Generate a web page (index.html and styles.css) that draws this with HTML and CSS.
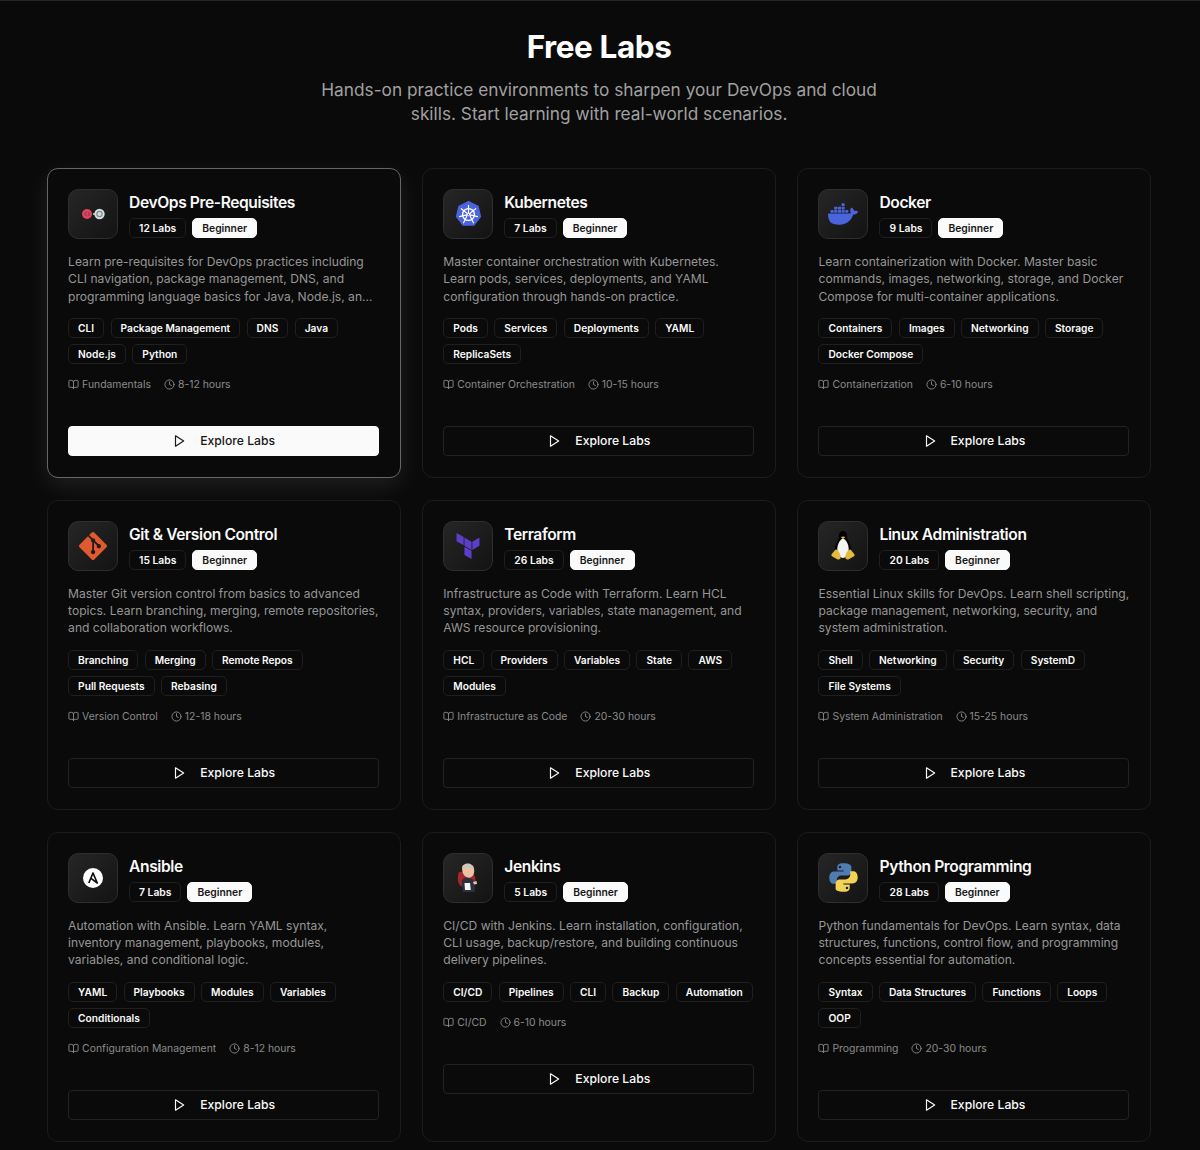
FILE: index.html
```html
<!DOCTYPE html>
<html lang="en">
<head>
    <meta charset="UTF-8">
    <meta name="viewport" content="width=device-width, initial-scale=1.0">
    <title>Free Labs</title>
    <link rel="stylesheet" href="styles.css">
</head>
<body>
    <svg class="sprite" aria-hidden="true">
        <symbol id="i-book" viewBox="0 0 24 24"><path d="M12 7v14"/><path d="M3 18a1 1 0 0 1-1-1V4a1 1 0 0 1 1-1h5a4 4 0 0 1 4 4 4 4 0 0 1 4-4h5a1 1 0 0 1 1 1v13a1 1 0 0 1-1 1h-6a3 3 0 0 0-3 3 3 3 0 0 0-3-3z"/></symbol>
        <symbol id="i-clock" viewBox="0 0 24 24"><circle cx="12" cy="12" r="10"/><path d="M12 6v6l4 2"/></symbol>
        <symbol id="i-play" viewBox="0 0 24 24"><path d="M6 3l14 9-14 9z"/></symbol>
    </svg>

    <section class="labs">
        <header class="hero">
            <h1>Free Labs</h1>
            <p>Hands-on practice environments to sharpen your DevOps and cloud skills. Start learning with real-world scenarios.</p>
        </header>

        <div class="lab-grid">
            <!-- DevOps -->
            <article class="lab-card active">
                <div class="lab-head">
                    <div class="lab-icon">
                        <svg width="36" height="36" viewBox="0 0 36 36"><path d="M18 18h8" stroke="#9aa3a8" stroke-width="2"/><circle cx="12" cy="18" r="5" fill="#d9455f"/><path d="M11.500 16l-1.800 2 1.800 2M13 16l1.500 2-1.500 2" fill="none" stroke="#8e2238" stroke-width=".8"/><circle cx="24.500" cy="18" r="5.200" fill="#d5dde0"/><circle cx="24.500" cy="18" r="2.600" fill="none" stroke="#7f8b90" stroke-width="1.200"/></svg>
                    </div>
                    <div class="lab-title">
                        <h3>DevOps Pre-Requisites</h3>
                        <div class="badges"><span class="badge">12 Labs</span><span class="badge level">Beginner</span></div>
                    </div>
                </div>
                <p class="lab-desc">Learn pre-requisites for DevOps practices including CLI navigation, package management, DNS, and programming language basics for Java, Node.js, an...</p>
                <div class="tags"><span>CLI</span><span>Package Management</span><span>DNS</span><span>Java</span><span>Node.js</span><span>Python</span></div>
                <div class="lab-meta">
                    <span><svg><use href="#i-book"/></svg>Fundamentals</span>
                    <span><svg><use href="#i-clock"/></svg>8-12 hours</span>
                </div>
                <button class="explore"><svg><use href="#i-play"/></svg>Explore Labs</button>
            </article>

            <!-- Kubernetes -->
            <article class="lab-card">
                <div class="lab-head">
                    <div class="lab-icon">
                        <svg width="27" height="27" viewBox="0 0 30 30">
                            <path d="M15 .8l10.600 5.100 2.700 11.500-7.300 9.300H9L1.700 17.400 4.400 5.900z" fill="#4a64dc" stroke="#4a64dc" stroke-width="1.500" stroke-linejoin="round"/>
                            <g fill="none" stroke="#fff" stroke-linecap="round">
                                <circle cx="15" cy="15" r="6.600" stroke-width="1.500"/>
                                <circle cx="15" cy="15" r="1.300" stroke-width="1"/>
                                <path stroke-width="1.300" d="M15 4.800v8.400M23 8.600l-6.600 5.300M25 17.300l-8.200-1.900M20.500 24.200l-3.700-7.500M9.500 24.200l3.700-7.500M5 17.300l8.200-1.900M7 8.600l6.600 5.300"/>
                            </g>
                        </svg>
                    </div>
                    <div class="lab-title">
                        <h3>Kubernetes</h3>
                        <div class="badges"><span class="badge">7 Labs</span><span class="badge level">Beginner</span></div>
                    </div>
                </div>
                <p class="lab-desc">Master container orchestration with Kubernetes. Learn pods, services, deployments, and YAML configuration through hands-on practice.</p>
                <div class="tags"><span>Pods</span><span>Services</span><span>Deployments</span><span>YAML</span><span>ReplicaSets</span></div>
                <div class="lab-meta">
                    <span><svg><use href="#i-book"/></svg>Container Orchestration</span>
                    <span><svg><use href="#i-clock"/></svg>10-15 hours</span>
                </div>
                <button class="explore"><svg><use href="#i-play"/></svg>Explore Labs</button>
            </article>

            <!-- Docker -->
            <article class="lab-card">
                <div class="lab-head">
                    <div class="lab-icon">
                        <svg width="30" height="30" viewBox="0 0 24 24"><path fill="#4a64dc" d="M13.983 11.078h2.119a.186.186 0 00.186-.185V9.006a.186.186 0 00-.186-.186h-2.119a.185.185 0 00-.185.185v1.888c0 .102.083.185.185.185m-2.954-5.43h2.118a.186.186 0 00.186-.186V3.574a.186.186 0 00-.186-.185h-2.118a.185.185 0 00-.185.185v1.888c0 .102.082.185.185.185m0 2.716h2.118a.187.187 0 00.186-.186V6.29a.186.186 0 00-.186-.185h-2.118a.185.185 0 00-.185.185v1.887c0 .102.082.185.185.186m-2.93 0h2.12a.186.186 0 00.184-.186V6.29a.185.185 0 00-.185-.185H8.1a.185.185 0 00-.185.185v1.887c0 .102.083.185.185.186m-2.964 0h2.119a.186.186 0 00.185-.186V6.29a.185.185 0 00-.185-.185H5.136a.186.186 0 00-.186.185v1.887c0 .102.084.185.186.186m5.893 2.715h2.118a.186.186 0 00.186-.185V9.006a.186.186 0 00-.186-.186h-2.118a.185.185 0 00-.185.185v1.888c0 .102.082.185.185.185m-2.93 0h2.12a.185.185 0 00.184-.185V9.006a.185.185 0 00-.184-.186h-2.12a.185.185 0 00-.184.185v1.888c0 .102.083.185.185.185m-2.964 0h2.119a.185.185 0 00.185-.185V9.006a.185.185 0 00-.184-.186h-2.12a.186.186 0 00-.186.186v1.887c0 .102.084.185.186.185m-2.92 0h2.12a.185.185 0 00.184-.185V9.006a.185.185 0 00-.184-.186h-2.12a.185.185 0 00-.184.185v1.888c0 .102.082.185.185.185M23.763 9.89c-.065-.051-.672-.51-1.954-.51-.338.001-.676.03-1.01.087-.248-1.7-1.653-2.53-1.716-2.566l-.344-.199-.226.327c-.284.438-.49.922-.612 1.43-.23.97-.09 1.882.403 2.661-.595.332-1.55.413-1.744.42H.751a.751.751 0 00-.75.748 11.376 11.376 0 00.692 4.062c.545 1.428 1.355 2.48 2.41 3.124 1.18.723 3.1 1.137 5.275 1.137.983.003 1.963-.086 2.93-.266a12.248 12.248 0 003.823-1.389c.98-.567 1.86-1.288 2.61-2.136 1.252-1.418 1.998-2.997 2.553-4.4h.221c1.372 0 2.215-.549 2.68-1.009.309-.293.55-.65.707-1.046l.098-.288Z"/></svg>
                    </div>
                    <div class="lab-title">
                        <h3>Docker</h3>
                        <div class="badges"><span class="badge">9 Labs</span><span class="badge level">Beginner</span></div>
                    </div>
                </div>
                <p class="lab-desc">Learn containerization with Docker. Master basic commands, images, networking, storage, and Docker Compose for multi-container applications.</p>
                <div class="tags"><span>Containers</span><span>Images</span><span>Networking</span><span>Storage</span><span>Docker Compose</span></div>
                <div class="lab-meta">
                    <span><svg><use href="#i-book"/></svg>Containerization</span>
                    <span><svg><use href="#i-clock"/></svg>6-10 hours</span>
                </div>
                <button class="explore"><svg><use href="#i-play"/></svg>Explore Labs</button>
            </article>

            <!-- Git -->
            <article class="lab-card">
                <div class="lab-head">
                    <div class="lab-icon">
                        <svg width="28" height="28" viewBox="0 0 24 24"><path fill="#e0592f" d="M23.546 10.93L13.067.452c-.604-.603-1.582-.603-2.188 0L8.708 2.627l2.76 2.76c.645-.215 1.379-.07 1.889.441.516.515.658 1.258.438 1.9l2.658 2.66c.645-.223 1.387-.078 1.9.435.721.72.721 1.884 0 2.604-.719.719-1.881.719-2.6 0-.539-.541-.674-1.337-.404-1.996L12.86 8.955v6.525c.176.086.342.203.488.348.713.721.713 1.883 0 2.6-.719.721-1.889.721-2.609 0-.719-.719-.719-1.879 0-2.598.182-.18.387-.316.605-.406V8.835c-.217-.091-.424-.222-.6-.401-.545-.545-.676-1.342-.396-2.009L7.636 3.7.45 10.881c-.6.605-.6 1.584 0 2.189l10.48 10.477c.604.604 1.582.604 2.186 0l10.43-10.43c.605-.603.605-1.582 0-2.187"/></svg>
                    </div>
                    <div class="lab-title">
                        <h3>Git &amp; Version Control</h3>
                        <div class="badges"><span class="badge">15 Labs</span><span class="badge level">Beginner</span></div>
                    </div>
                </div>
                <p class="lab-desc">Master Git version control from basics to advanced topics. Learn branching, merging, remote repositories, and collaboration workflows.</p>
                <div class="tags"><span>Branching</span><span>Merging</span><span>Remote Repos</span><span>Pull Requests</span><span>Rebasing</span></div>
                <div class="lab-meta">
                    <span><svg><use href="#i-book"/></svg>Version Control</span>
                    <span><svg><use href="#i-clock"/></svg>12-18 hours</span>
                </div>
                <button class="explore"><svg><use href="#i-play"/></svg>Explore Labs</button>
            </article>

            <!-- Terraform -->
            <article class="lab-card">
                <div class="lab-head">
                    <div class="lab-icon">
                        <svg width="26" height="26" viewBox="0 0 24 24"><path fill="#5c3fc9" d="M1.44 0v7.575l6.561 3.79V3.787zm21.12 4.227l-6.561 3.791v7.574l6.56-3.787zM8.72 4.23v7.575l6.561 3.787V8.018zm0 8.405v7.575L15.28 24v-7.578z"/></svg>
                    </div>
                    <div class="lab-title">
                        <h3>Terraform</h3>
                        <div class="badges"><span class="badge">26 Labs</span><span class="badge level">Beginner</span></div>
                    </div>
                </div>
                <p class="lab-desc">Infrastructure as Code with Terraform. Learn HCL syntax, providers, variables, state management, and AWS resource provisioning.</p>
                <div class="tags"><span>HCL</span><span>Providers</span><span>Variables</span><span>State</span><span>AWS</span><span>Modules</span></div>
                <div class="lab-meta">
                    <span><svg><use href="#i-book"/></svg>Infrastructure as Code</span>
                    <span><svg><use href="#i-clock"/></svg>20-30 hours</span>
                </div>
                <button class="explore"><svg><use href="#i-play"/></svg>Explore Labs</button>
            </article>

            <!-- Linux -->
            <article class="lab-card">
                <div class="lab-head">
                    <div class="lab-icon">
                        <svg width="24" height="29" viewBox="0 0 24 29">
                            <path d="M12 0C9 0 8 2.400 8 5c0 2.500-.5 3.500-2 6-1.800 3-2.500 6-2 10l3 6h10l3-6c.5-4-.2-7-2-10-1.500-2.500-2-3.500-2-6 0-2.600-1-5-4-5z" fill="#000"/>
                            <path d="M12 7.500c-1.500.8-2.400 1.200-3.500 3-1.800 3-2.600 6.500-2.100 10 .4 3 3 6.500 5.600 6.500s5.200-3.500 5.600-6.500c.5-3.500-.3-7-2.100-10-1.100-1.800-2-2.200-3.500-3z" fill="#f4f4f2"/>
                            <path d="M9.800 6c.8-.8 3.600-.8 4.400 0L12 8.200z" fill="#e2b033"/>
                            <path d="M4.500 18.500L.8 23c-.8 1-.5 2 .6 2.400l4.800 2.800c1.500.8 3.300.2 3.500-1.600.2-2.400-1.700-7-4-7.900zM19.500 18.500l3.700 4.500c.8 1 .5 2-.6 2.400l-4.800 2.800c-1.500.8-3.300.2-3.500-1.600-.2-2.400 1.700-7 4-7.900z" fill="#e6bb3a"/>
                        </svg>
                    </div>
                    <div class="lab-title">
                        <h3>Linux Administration</h3>
                        <div class="badges"><span class="badge">20 Labs</span><span class="badge level">Beginner</span></div>
                    </div>
                </div>
                <p class="lab-desc">Essential Linux skills for DevOps. Learn shell scripting, package management, networking, security, and system administration.</p>
                <div class="tags"><span>Shell</span><span>Networking</span><span>Security</span><span>SystemD</span><span>File Systems</span></div>
                <div class="lab-meta">
                    <span><svg><use href="#i-book"/></svg>System Administration</span>
                    <span><svg><use href="#i-clock"/></svg>15-25 hours</span>
                </div>
                <button class="explore"><svg><use href="#i-play"/></svg>Explore Labs</button>
            </article>

            <!-- Ansible -->
            <article class="lab-card">
                <div class="lab-head">
                    <div class="lab-icon">
                        <svg width="20" height="20" viewBox="0 0 20 20"><circle cx="10" cy="10" r="10" fill="#fff"/><path d="M5.800 15L10 5l4.300 10-6.300-4.600" fill="none" stroke="#111" stroke-width="1.700" stroke-linejoin="round"/></svg>
                    </div>
                    <div class="lab-title">
                        <h3>Ansible</h3>
                        <div class="badges"><span class="badge">7 Labs</span><span class="badge level">Beginner</span></div>
                    </div>
                </div>
                <p class="lab-desc">Automation with Ansible. Learn YAML syntax, inventory management, playbooks, modules, variables, and conditional logic.</p>
                <div class="tags"><span>YAML</span><span>Playbooks</span><span>Modules</span><span>Variables</span><span>Conditionals</span></div>
                <div class="lab-meta">
                    <span><svg><use href="#i-book"/></svg>Configuration Management</span>
                    <span><svg><use href="#i-clock"/></svg>8-12 hours</span>
                </div>
                <button class="explore"><svg><use href="#i-play"/></svg>Explore Labs</button>
            </article>

            <!-- Jenkins -->
            <article class="lab-card">
                <div class="lab-head">
                    <div class="lab-icon">
                        <svg width="26" height="30" viewBox="0 0 26 30">
                            <path d="M4 9c-1.500 3-1.500 8-.5 11 1 2.500 3 3.500 4.500 3.500L18 22c2-1 3-4 2-8L17 8z" fill="#a5282c"/>
                            <path d="M7 5c0-3 3-4.500 6-4.500S19 3 19 6c.5 2 .2 4-.5 5.500-1 2.500-3.500 3.500-5.500 3-3-.5-5-3-5.500-5.500z" fill="#e9c3a4"/>
                            <path d="M8 3c2-2.500 7-3 10 0l1 3c-3-1-7-2-11-.5z" fill="#c9c5bf"/>
                            <path d="M7 17c2-2 3-2.500 5-2 3 0 5 .5 6.500 2l1.500 6c.5 2-.5 6-.5 6H8l-1-6c-.3-2-.5-4 0-6z" fill="#2b2f3f"/>
                            <path d="M9.500 20h5.500l.8 7H10z" fill="#f4f4f2"/>
                            <path d="M18 19l3.500-1 .5 3-3 .5z" fill="#e9c3a4"/>
                        </svg>
                    </div>
                    <div class="lab-title">
                        <h3>Jenkins</h3>
                        <div class="badges"><span class="badge">5 Labs</span><span class="badge level">Beginner</span></div>
                    </div>
                </div>
                <p class="lab-desc">CI/CD with Jenkins. Learn installation, configuration, CLI usage, backup/restore, and building continuous delivery pipelines.</p>
                <div class="tags"><span>CI/CD</span><span>Pipelines</span><span>CLI</span><span>Backup</span><span>Automation</span></div>
                <div class="lab-meta">
                    <span><svg><use href="#i-book"/></svg>CI/CD</span>
                    <span><svg><use href="#i-clock"/></svg>6-10 hours</span>
                </div>
                <button class="explore"><svg><use href="#i-play"/></svg>Explore Labs</button>
            </article>

            <!-- Python -->
            <article class="lab-card">
                <div class="lab-head">
                    <div class="lab-icon">
                        <svg width="31" height="31" viewBox="0 0 24 24">
                            <path fill="#4f7db3" fill-rule="evenodd" d="M11.800 1C7.800 1 7.200 2.700 7.200 4.100v2.500h4.900v.8H5C2.800 7.400 1 8.800 1 12.100c0 3.300 1.700 4.800 3.500 4.800h2.300v-2.800c0-2 1.700-3.600 3.700-3.600h4.600c1.700 0 3-1.400 3-3.100V4.100C18.100 2.500 16.700 1 11.800 1zM9.300 2.900a.95.95 0 1 1 0 1.900.95.95 0 0 1 0-1.900z"/>
                            <path fill="#f2d257" fill-rule="evenodd" d="M12.200 23c4 0 4.600-1.700 4.600-3.100v-2.500h-4.900v-.8H19c2.200 0 4-1.400 4-4.700 0-3.300-1.700-4.800-3.500-4.800h-2.300v2.800c0 2-1.700 3.600-3.700 3.600H8.900c-1.700 0-3 1.400-3 3.100v4.300C5.900 21.500 7.300 23 12.200 23zM14.700 21.100a.95.95 0 1 1 0-1.900.95.95 0 0 1 0 1.900z"/>
                        </svg>
                    </div>
                    <div class="lab-title">
                        <h3>Python Programming</h3>
                        <div class="badges"><span class="badge">28 Labs</span><span class="badge level">Beginner</span></div>
                    </div>
                </div>
                <p class="lab-desc">Python fundamentals for DevOps. Learn syntax, data structures, functions, control flow, and programming concepts essential for automation.</p>
                <div class="tags"><span>Syntax</span><span>Data Structures</span><span>Functions</span><span>Loops</span><span>OOP</span></div>
                <div class="lab-meta">
                    <span><svg><use href="#i-book"/></svg>Programming</span>
                    <span><svg><use href="#i-clock"/></svg>20-30 hours</span>
                </div>
                <button class="explore"><svg><use href="#i-play"/></svg>Explore Labs</button>
            </article>
        </div>
    </section>
</body>
</html>
```

FILE: styles.css
```css
* {
    margin: 0;
    padding: 0;
    box-sizing: border-box;
}

body {
    font-family: Inter, 'Liberation Sans', sans-serif;
    background: #0a0a0a;
    color: #fafafa;
    border-top: 1px solid #262626;
}

.sprite {
    display: none;
}

.labs {
    width: 1105px;
    margin-left: 46.6px;
    padding: 28px 0 8px;
}

.hero {
    text-align: center;
    margin-bottom: 42px;
}

.hero h1 {
    font-size: 31.5px;
    line-height: 36px;
    font-weight: 700;
    letter-spacing: -0.4px;
    margin-bottom: 13px;
    color: #fff;
}

.hero p {
    width: 576px;
    margin: 0 auto;
    font-size: 17.25px;
    line-height: 24px;
    color: #a1a1a1;
}

.lab-grid {
    display: grid;
    grid-template-columns: repeat(3, 354px);
    gap: 22px 21.2px;
}

.lab-card {
    background: #0a0a0a;
    border: 1px solid #1c1c1c;
    border-radius: 11px;
    padding: 20px 20.5px 21px;
}

.lab-card.active {
    border-color: #666;
    box-shadow: 0 8px 24px rgba(255, 255, 255, 0.09);
}

.lab-head {
    display: flex;
    gap: 11px;
}

.lab-icon {
    width: 50px;
    height: 50px;
    flex-shrink: 0;
    display: flex;
    align-items: center;
    justify-content: center;
    border: 1px solid #2e2e2e;
    border-radius: 10px;
    background: linear-gradient(135deg, #262626 0%, #131313 100%);
}

.lab-title h3 {
    font-size: 15.6px;
    line-height: 28px;
    font-weight: 600;
    letter-spacing: -0.4px;
    color: #fafafa;
    margin-bottom: 1px;
}

.badges {
    display: flex;
    gap: 6px;
}

.badge {
    height: 20px;
    line-height: 18px;
    padding: 0 9px;
    font-size: 10.3px;
    font-weight: 600;
    border: 1px solid #1f1f1f;
    border-radius: 5px;
    color: #fafafa;
}

.badge.level {
    background: #fafafa;
    border-color: #fafafa;
    color: #171717;
}

.lab-desc {
    margin-top: 14px;
    font-size: 12.1px;
    line-height: 17.3px;
    color: #969696;
}

.tags {
    display: flex;
    flex-wrap: wrap;
    gap: 6px 6.4px;
    margin-top: 13px;
}

.tags span {
    height: 20px;
    line-height: 18px;
    padding: 0 9px;
    font-size: 10.2px;
    font-weight: 600;
    border: 1px solid #1f1f1f;
    border-radius: 5px;
    color: #fafafa;
}

.lab-meta {
    display: flex;
    gap: 13px;
    margin-top: 13px;
    font-size: 10.4px;
    line-height: 16px;
    color: #8a8a8a;
}

.lab-meta span {
    display: flex;
    align-items: center;
    gap: 3px;
}

.lab-meta svg {
    width: 11px;
    height: 11px;
    fill: none;
    stroke: currentColor;
    stroke-width: 2;
    stroke-linecap: round;
    stroke-linejoin: round;
}

.explore {
    display: flex;
    align-items: center;
    justify-content: center;
    gap: 14px;
    width: 100%;
    height: 30px;
    margin-top: 33px;
    background: transparent;
    border: 1px solid #222;
    border-radius: 4px;
    color: #fafafa;
    font-family: inherit;
    font-size: 12.2px;
    font-weight: 500;
}

.explore svg {
    width: 14px;
    height: 14px;
    fill: none;
    stroke: currentColor;
    stroke-width: 2;
    stroke-linejoin: round;
}

.lab-card.active .explore {
    background: #fafafa;
    border-color: #fafafa;
    color: #171717;
}
```
